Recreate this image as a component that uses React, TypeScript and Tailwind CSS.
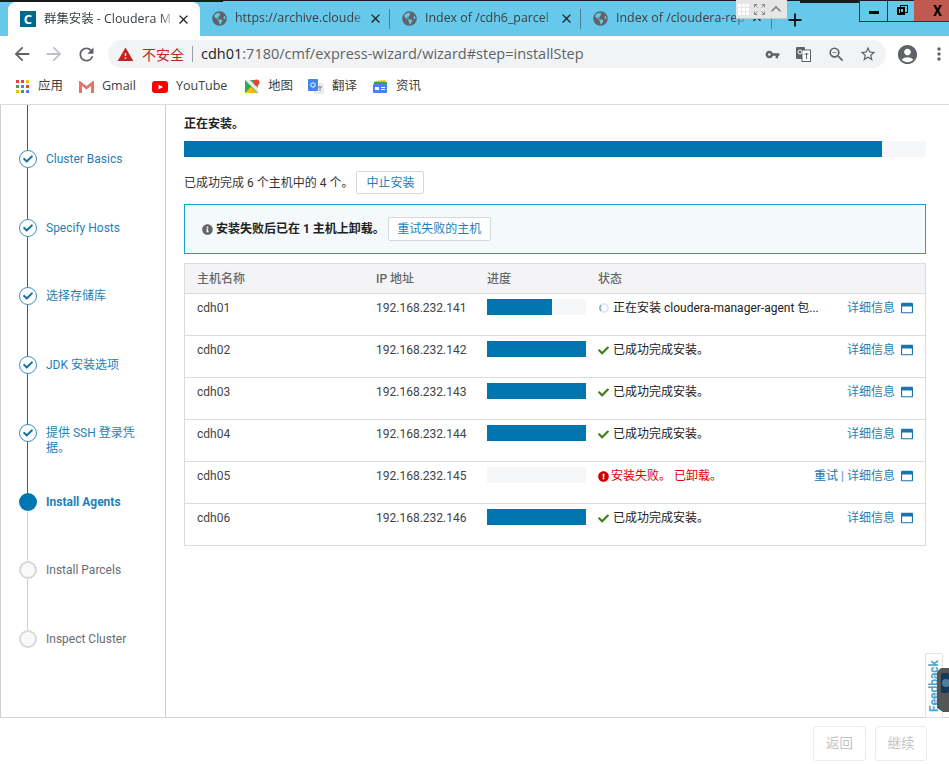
import React from 'react';
import { FaCheck, FaExclamationCircle, FaGlobeAmericas, FaInfoCircle, FaRegWindowMaximize } from 'react-icons/fa';
import { MdAccountCircle, MdAdd, MdArrowBack, MdArrowForward, MdClose, MdExpandLess, MdMoreVert, MdOutlineStarBorder, MdRefresh, MdVpnKey, MdWarning, MdZoomOut } from 'react-icons/md';

const CN = "font-['Roboto','Noto_Sans_CJK_SC',sans-serif]";
const CHROME = "font-['Open_Sans','Noto_Sans_CJK_SC',sans-serif]";
const FADE = '[mask-image:linear-gradient(to_right,black_88%,transparent)]';

const Tab = ({ title, width, sep = true, close = 'x' }: { title: string; width: string; sep?: boolean; close?: string }) => (
  <div className={`relative flex h-full items-center pl-[12px] pr-[7px] ${width}`}>
    <FaGlobeAmericas className="size-[15px] shrink-0 text-[#5f6368]" />
    <span className={`ml-[8px] min-w-0 flex-1 whitespace-nowrap text-[12.4px] text-[#3c4043] ${FADE}`}>{title}</span>
    {close === 'x' ? <MdClose className="size-[15px] shrink-0 text-[#202124]" /> : <MdExpandLess className="size-[16px] shrink-0 text-[#202124]" />}
    {sep && <span className="absolute right-0 top-[8px] h-[20px] w-px bg-[#4a7f95]" />}
  </div>
);

const Bookmark = ({ icon, label, width }: { icon: React.ReactNode; label: string; width: string }) => (
  <div className={`flex items-center ${width}`}>
    <span className="flex w-[16px] justify-center">{icon}</span>
    <span className="ml-[8px] text-[12.5px] text-[#3c4043]">{label}</span>
  </div>
);

const AppsIcon = () => {
  const colors = ['#ea4335', '#ea4335', '#fbbc05', '#34a853', '#4285f4', '#ea4335', '#fbbc05', '#34a853', '#4285f4'];
  return (
    <span className="grid grid-cols-3 gap-[2px]">
      {colors.map((c, i) => <span key={i} className="size-[3px]" style={{ background: c }} />)}
    </span>
  );
};

const GmailIcon = () => (
  <svg width="15" height="12" viewBox="0 0 15 12">
    <path d="M0 0v12h3V5l4.500 3.500L12 5v7h3V0h-1L7.500 5 1 0z" fill="#e57368" />
  </svg>
);

const YoutubeIcon = () => (
  <svg width="16" height="12" viewBox="0 0 16 12">
    <rect width="16" height="12" rx="3" fill="#f00" />
    <path d="M6.500 3.500v5L11 6z" fill="#fff" />
  </svg>
);

const MapsIcon = () => (
  <svg width="15" height="15" viewBox="0 0 15 15">
    <rect y="1" width="13" height="13" fill="#34a853" />
    <path d="M0 14l6-6 6 6z" fill="#fbbc05" />
    <path d="M0 1l13 13V9L5 1z" fill="#e8eaed" />
    <path d="M13 1H8l5 5z" fill="#4285f4" />
    <circle cx="11.500" cy="3.500" r="3" fill="#ea4335" />
  </svg>
);

const TranslateIcon = () => (
  <svg width="16" height="16" viewBox="0 0 16 16">
    <rect x="6" y="4" width="10" height="11" rx="1" fill="#e8eaed" />
    <rect width="10" height="12" rx="1" fill="#4285f4" />
    <circle cx="5" cy="6" r="2.200" fill="none" stroke="#fff" strokeWidth="1" />
    <path d="M10 8h4M12 7v5" stroke="#80868b" strokeWidth="1" />
  </svg>
);

const NewsIcon = () => (
  <svg width="15" height="15" viewBox="0 0 15 15">
    <path d="M2 2l10-1 2 5H2z" fill="#fbbc05" />
    <path d="M1 3h13v3H1z" fill="#34a853" />
    <rect y="5" width="14" height="9" rx="1" fill="#4285f4" />
    <rect x="2" y="8" width="4" height="3" fill="#fff" />
    <rect x="8" y="8" width="4" height="1" fill="#fff" />
    <rect x="8" y="10" width="4" height="1" fill="#fff" />
  </svg>
);

const PageTranslateIcon = () => (
  <svg width="15" height="15" viewBox="0 0 15 15">
    <rect width="9" height="12" rx="1" fill="#5f6368" />
    <rect x="6" y="3" width="8.500" height="11.500" fill="#fff" stroke="#5f6368" />
    <path d="M8.500 7h4M10.500 6v6" stroke="#5f6368" strokeWidth="1" />
    <circle cx="4" cy="5" r="2" fill="none" stroke="#fff" />
  </svg>
);

const ExpandIcon = () => (
  <svg width="11" height="11" viewBox="0 0 11 11" fill="none" stroke="#8a8a8a" strokeWidth="1">
    <path d="M0.500 3.500v-3h3M0.500 0.500l3 3M7.500 0.500h3v3M10.500 0.500l-3 3M0.500 7.500v3h3M0.500 10.500l3-3M7.500 10.500h3v-3M10.500 10.500l-3-3" />
  </svg>
);

const steps = [
  { label: 'Cluster Basics', state: 'done' },
  { label: 'Specify Hosts', state: 'done' },
  { label: '选择存储库', state: 'done' },
  { label: 'JDK 安装选项', state: 'done' },
  { label: '提供 SSH 登录凭据。', state: 'done' },
  { label: 'Install Agents', state: 'active' },
  { label: 'Install Parcels', state: 'todo' },
  { label: 'Inspect Cluster', state: 'todo' },
];

const Step = ({ label, state, last }: { label: string; state: string; last: boolean }) => {
  const blue = state !== 'todo';
  return (
    <div className="relative flex h-[68.5px] shrink-0 items-start">
      <div className="relative flex w-[18px] justify-center">
        {state === 'done' && (
          <span className="z-10 flex size-[18px] items-center justify-center rounded-full border border-[#3a8fc0] bg-white">
            <FaCheck className="size-[10px] text-[#0f6fa8]" />
          </span>
        )}
        {state === 'active' && <span className="z-10 size-[18px] rounded-full bg-[#0076b0]" />}
        {state === 'todo' && <span className="z-10 size-[18px] rounded-full border-2 border-[#d8d8d8] bg-[#f9f9fb]" />}
        {!last && <span className={`absolute left-[8px] top-[18px] h-[51px] w-px ${state === 'done' ? 'bg-[#0f6d9c]' : 'bg-[#d0d0d0]'}`} />}
      </div>
      <span className={`ml-[9px] w-[94px] pt-[2px] text-[12px] leading-[15px] ${blue ? 'text-[#1f7fb5]' : 'text-[#6b6b73]'} ${state === 'active' ? 'font-bold' : ''}`}>{label}</span>
    </div>
  );
};

const hosts = [
  { name: 'cdh01', ip: '192.168.232.141', pct: 66, state: 'running' },
  { name: 'cdh02', ip: '192.168.232.142', pct: 100, state: 'ok' },
  { name: 'cdh03', ip: '192.168.232.143', pct: 100, state: 'ok' },
  { name: 'cdh04', ip: '192.168.232.144', pct: 100, state: 'ok' },
  { name: 'cdh05', ip: '192.168.232.145', pct: 0, state: 'failed' },
  { name: 'cdh06', ip: '192.168.232.146', pct: 100, state: 'ok' },
];

const Bar = ({ pct }: { pct: number }) => (
  <div className="-mt-px h-[16px] w-[99px] bg-[#f6f7f9]">
    <div className="h-full bg-[#0076b0]" style={{ width: `${pct}%` }} />
  </div>
);

const StatusCell = ({ state }: { state: string }) => {
  if (state === 'running') {
    return (
      <div className="flex items-center text-[#222]">
        <span className="ml-[1px] size-[10px] rounded-full border-2 border-[#dfe8f0] border-l-[#8fb4cc]" />
        <span className="ml-[4px]">正在安装 cloudera-manager-agent 包...</span>
      </div>
    );
  }
  if (state === 'failed') {
    return (
      <div className="flex items-center text-[#e00000]">
        <FaExclamationCircle className="size-[11px] text-[#d40000]" />
        <span className="ml-[2px]">安装失败。 已卸载。</span>
      </div>
    );
  }
  return (
    <div className="flex items-center text-[#222]">
      <FaCheck className="size-[11px] text-[#3f7f1e]" />
      <span className="ml-[4px]">已成功完成安装。</span>
    </div>
  );
};

const HostRow = ({ host }: { host: (typeof hosts)[number] }) => (
  <div className="flex h-[42px] border-t border-[#dcdcdc] pt-[6px] text-[12px] leading-[16px] text-[#444]">
    <div className="w-[191px] pl-[12px]">{host.name}</div>
    <div className="w-[111px]">{host.ip}</div>
    <div className="w-[111px]"><Bar pct={host.pct} /></div>
    <div className="flex-1"><StatusCell state={host.state} /></div>
    <div className="flex items-center self-start pr-[12px] text-[#1f7fb5]">
      {host.state === 'failed' && <span className="mr-[3px] text-[#0f76ac]">重试 <span className="text-[#5a8fc0]">|</span></span>}
      <span>详细信息</span>
      <FaRegWindowMaximize className="ml-[6px] size-[12px] text-[#1a75ad]" />
    </div>
  </div>
);

export default function App() {
  return (
    <div className={`relative flex h-[764px] w-[949px] flex-col overflow-hidden bg-white ${CN}`}>
      {/* browser tabs */}
      <div className={`relative h-[36px] shrink-0 border-t border-[#1a1a1a] bg-[#66c8ea] pl-[8px] ${CHROME}`}>
        <div className="flex h-[35px]">
          <div className="mt-[1px] flex h-[34px] w-[192px] items-center rounded-t-[8px] bg-white pl-[12px] pr-[9px]">
            <span className="flex size-[16px] shrink-0 items-center justify-center bg-[#00688b] text-[13px] font-bold leading-none text-white">C</span>
            <span className={`ml-[8px] min-w-0 flex-1 whitespace-nowrap text-[12.4px] text-[#3c4043] ${FADE}`}>群集安装 - Cloudera M</span>
            <MdClose className="size-[15px] shrink-0 text-[#202124]" />
          </div>
          <Tab title="https://archive.cloude" width="w-[190px]" />
          <Tab title="Index of /cdh6_parcel" width="w-[191px]" />
          <Tab title="Index of /cloudera-rep" width="w-[191px]" close="up" />
          <MdAdd className="ml-[12px] mt-[8px] size-[22px] text-[#111]" />
        </div>
      </div>

      {/* window frame strip, remote desktop bar and window buttons */}
      <span className="absolute left-0 top-0 h-[2px] w-[223px] bg-[#1a1a1a]" />
      <span className="absolute left-[800px] top-0 h-[3px] w-[60px] bg-[#1a1a1a]" />
      <div className="absolute left-[736px] top-0 flex h-[19px] w-[51px] items-center border-b border-[#c8c8c8] bg-[#e6e6e6]">
        <span className="ml-[2px] grid grid-cols-3 gap-[1px]">
          {Array.from({ length: 9 }).map((_, i) => <span key={i} className="size-[3px] bg-white" />)}
        </span>
        <span className="ml-[5px]"><ExpandIcon /></span>
        <MdExpandLess className="ml-[1px] size-[20px] text-[#808080]" />
      </div>
      <div className="absolute right-0 top-0 flex h-[22px] border-b border-l border-[#1c3a46]">
        <div className="flex w-[28px] items-center justify-center border-r border-[#1c3a46]"><span className="mt-[3px] h-[3px] w-[10px] bg-black" /></div>
        <div className="flex w-[26px] items-center justify-center">
          <span className="relative size-[8px] border-2 border-black"><span className="absolute left-[1px] top-[-4px] size-[8px] border border-black" /></span>
        </div>
        <div className="flex w-[35px] items-center justify-center bg-[#c0594f] pl-[12px] text-[14px] font-bold leading-none text-black">X</div>
      </div>

      {/* address bar */}
      <div className={`flex h-[36px] shrink-0 items-center ${CHROME}`}>
        <MdArrowBack className="ml-[11px] size-[22px] text-[#5f6368]" />
        <MdArrowForward className="ml-[10px] size-[22px] text-[#bdc1c6]" />
        <MdRefresh className="ml-[11px] size-[21px] text-[#5f6368]" />
        <div className="ml-[11px] flex h-[28px] w-[778px] items-center rounded-full bg-[#f1f3f4]">
          <MdWarning className="ml-[9px] size-[17px] text-[#c5221f]" />
          <span className="ml-[8px] text-[14px] text-[#c5221f]">不安全</span>
          <span className="ml-[8px] h-[16px] w-px bg-[#9aa0a6]" />
          <span className="ml-[8px] whitespace-nowrap text-[14.500px] text-[#5f6368]"><span className="text-[#202124]">cdh01</span>:7180/cmf/express-wizard/wizard#step=installStep</span>
          <span className="ml-auto flex items-center">
            <MdVpnKey className="size-[15px] text-[#5f6368]" />
            <span className="ml-[16px]"><PageTranslateIcon /></span>
            <MdZoomOut className="ml-[16px] size-[19px] text-[#5f6368]" />
            <MdOutlineStarBorder className="ml-[13px] mr-[9px] size-[18px] text-[#5f6368]" />
          </span>
        </div>
        <MdAccountCircle className="ml-[10px] size-[23px] text-[#5f6368]" />
        <MdMoreVert className="ml-[10px] size-[20px] text-[#5f6368]" />
      </div>

      {/* bookmarks */}
      <div className={`flex h-[33px] shrink-0 items-center border-b border-[#dadce0] pb-[3px] pl-[14px] ${CHROME}`}>
        <Bookmark icon={<AppsIcon />} label="应用" width="w-[64px]" />
        <Bookmark icon={<GmailIcon />} label="Gmail" width="w-[74px]" />
        <Bookmark icon={<YoutubeIcon />} label="YouTube" width="w-[92px]" />
        <Bookmark icon={<MapsIcon />} label="地图" width="w-[64px]" />
        <Bookmark icon={<TranslateIcon />} label="翻译" width="w-[64px]" />
        <Bookmark icon={<NewsIcon />} label="资讯" width="w-[64px]" />
      </div>

      {/* wizard */}
      <div className="flex min-h-0 flex-1 border-b border-[#d4d4d4]">
        <aside className="relative w-[166px] shrink-0 overflow-hidden border-x border-[#cfcfcf] pl-[18px] pt-[45px]">
          <span className="absolute left-[26px] top-0 h-[45px] w-px bg-[#0f6d9c]" />
          {steps.map((s, i) => <Step key={s.label} label={s.label} state={s.state} last={i === steps.length - 1} />)}
        </aside>

        <main className="min-w-0 flex-1 pl-[18px] pr-[23px] pt-[11px] text-[12px] text-[#333]">
          <div className="text-[12px] font-bold leading-[16px] text-[#222]">正在安装。</div>
          <div className="mt-[9px] h-[16px] bg-[#f6f7f9]">
            <div className="h-full w-[94.100%] bg-[#0076b0]" />
          </div>
          <div className="mt-[14px] flex items-center">
            <span>已成功完成 6 个主机中的 4 个。</span>
            <button className="ml-[3px] h-[23px] w-[68px] rounded-[2px] border border-[#d8d8d8] bg-white text-[12px] text-[#1f7fb5]">中止安装</button>
          </div>
          <div className="mt-[10px] flex h-[50px] items-center border border-[#16a0d6] bg-[#f4f9fc] pl-[17px]">
            <FaInfoCircle className="size-[11px] text-[#666]" />
            <span className="ml-[3px] font-bold text-[#222]">安装失败后已在 1 主机上卸载。</span>
            <button className="ml-[3px] h-[24px] w-[103px] rounded-[2px] border border-[#d8d8d8] bg-white text-[12px] text-[#1f7fb5]">重试失败的主机</button>
          </div>

          <div className="mt-[9px] border border-[#dcdcdc]">
            <div className="flex h-[29px] items-center bg-[#f4f4f6] text-[12px] font-medium text-[#666]">
              <div className="w-[191px] pl-[12px]">主机名称</div>
              <div className="w-[111px]">IP 地址</div>
              <div className="w-[111px]">进度</div>
              <div className="flex-1">状态</div>
            </div>
            {hosts.map(h => <HostRow key={h.name} host={h} />)}
          </div>
        </main>
      </div>

      {/* footer */}
      <div className="flex h-[46px] shrink-0 items-start justify-end gap-[9px] pr-[22px] pt-[8px]">
        <button disabled className="h-[35px] w-[53px] rounded-[3px] border border-[#ececec] bg-white text-[13.500px] text-[#c4c4c4]">返回</button>
        <button disabled className="h-[35px] w-[52px] rounded-[3px] border border-[#ececec] bg-white text-[13.500px] text-[#c4c4c4]">继续</button>
      </div>

      {/* feedback tab */}
      <div className="absolute left-[925px] top-[653px] flex h-[65px] w-[18px] items-center justify-center rounded-[2px] border border-[#e4e4e4] bg-white">
        <span className="whitespace-nowrap text-[12px] font-bold text-[#4aa3d0] [transform:rotate(-90deg)]">Feedback</span>
      </div>
      <svg className="absolute left-[937px] top-[668px]" width="12" height="44" viewBox="0 0 12 44">
        <path d="M4 0h8v44H6l-6-4V4z" fill="#555" />
        <rect x="4" y="5" width="8" height="20" rx="2" fill="#123a5e" />
        <circle cx="9" cy="15" r="4" fill="#4f7fa0" />
      </svg>
    </div>
  );
}
